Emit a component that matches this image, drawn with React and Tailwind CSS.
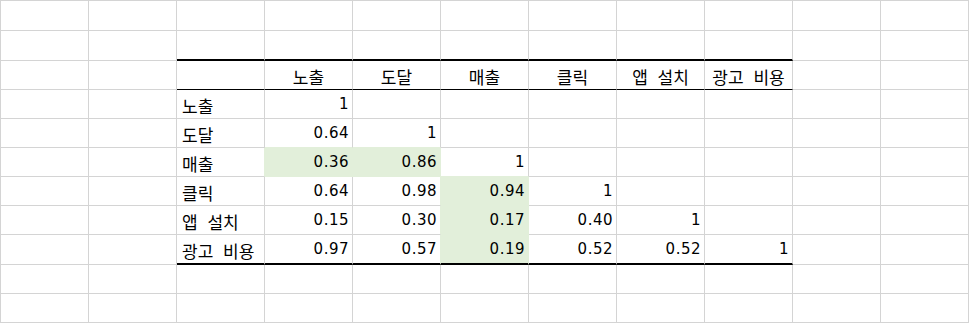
import React from 'react';

// 행 높이 (아래 테두리 포함)
const ROW_H = ['h-[30px]', 'h-[30px]', 'h-[29px]', 'h-[29px]', 'h-[29px]', 'h-[29px]', 'h-[29px]', 'h-[29px]', 'h-[30px]', 'h-[29px]', 'h-[29px]'];

const LABELS = ['노출', '도달', '매출', '클릭', '앱 설치', '광고 비용'];
const MATRIX = [
  ['1'],
  ['0.64', '1'],
  ['0.36', '0.86', '1'],
  ['0.64', '0.98', '0.94', '1'],
  ['0.15', '0.30', '0.17', '0.40', '1'],
  ['0.97', '0.57', '0.19', '0.52', '0.52', '1'],
];

const GREEN = new Set(['5-3', '5-4', '6-5', '7-5', '8-5']);
const isGreen = (r, c) => GREEN.has(`${r}-${c}`);
const inTable = (c) => c >= 2 && c <= 8;

function cellContent(r, c) {
  // 헤더 행
  if (r === 2 && c >= 3 && c <= 8) {
    return { text: LABELS[c - 3], kind: 'head' };
  }
  if (r >= 3 && r <= 8) {
    const i = r - 3;
    if (c === 2) return { text: LABELS[i], kind: 'label' };
    if (c >= 3 && c <= 8) {
      const v = MATRIX[i][c - 3];
      if (v) return { text: v, kind: 'num' };
    }
  }
  return null;
}

function Cell({ r, c }) {
  const green = isGreen(r, c);
  const rightGreen = green || isGreen(r, c + 1);
  const belowGreen = green || isGreen(r + 1, c);

  let bottom = belowGreen ? 'border-b border-b-[#e2efda]' : 'border-b border-b-[#d4d4d4]';
  if (inTable(c) && r === 1) bottom = 'border-b-2 border-b-black';
  if (inTable(c) && r === 2) bottom = 'border-b border-b-black';
  if (inTable(c) && r === 8) bottom = 'border-b-2 border-b-black';

  const right = rightGreen ? 'border-r border-r-[#e2efda]' : 'border-r border-r-[#d4d4d4]';
  const content = cellContent(r, c);

  let inner = null;
  if (content) {
    if (content.kind === 'head') {
      inner = <span className="w-full text-center text-[17px] leading-none pb-[4px] [word-spacing:6px]">{content.text}</span>;
    } else if (content.kind === 'label') {
      inner = <span className="pl-[5px] text-[17px] leading-none pb-[4px] whitespace-nowrap [word-spacing:6px]">{content.text}</span>;
    } else {
      inner = <span className="ml-auto pr-[3px] font-['DejaVu_Sans',sans-serif] text-[15px] tracking-[0.5px] leading-none pb-[6px]">{content.text}</span>;
    }
  }

  return (
    <div className={`w-[88px] shrink-0 flex items-end ${right} ${bottom} ${green ? 'bg-[#e2efda]' : 'bg-white'}`}>
      {inner}
    </div>
  );
}

export default function App() {
  return (
    <div className="w-[969px] h-[323px] bg-white text-black border-l border-t border-[#d4d4d4] font-['Noto_Sans_CJK_KR',sans-serif] overflow-hidden">
      {ROW_H.map((h, r) => (
        <div key={r} className={`flex ${h}`}>
          {Array.from({ length: 11 }).map((_, c) => (
            <Cell key={c} r={r} c={c} />
          ))}
        </div>
      ))}
    </div>
  );
}
